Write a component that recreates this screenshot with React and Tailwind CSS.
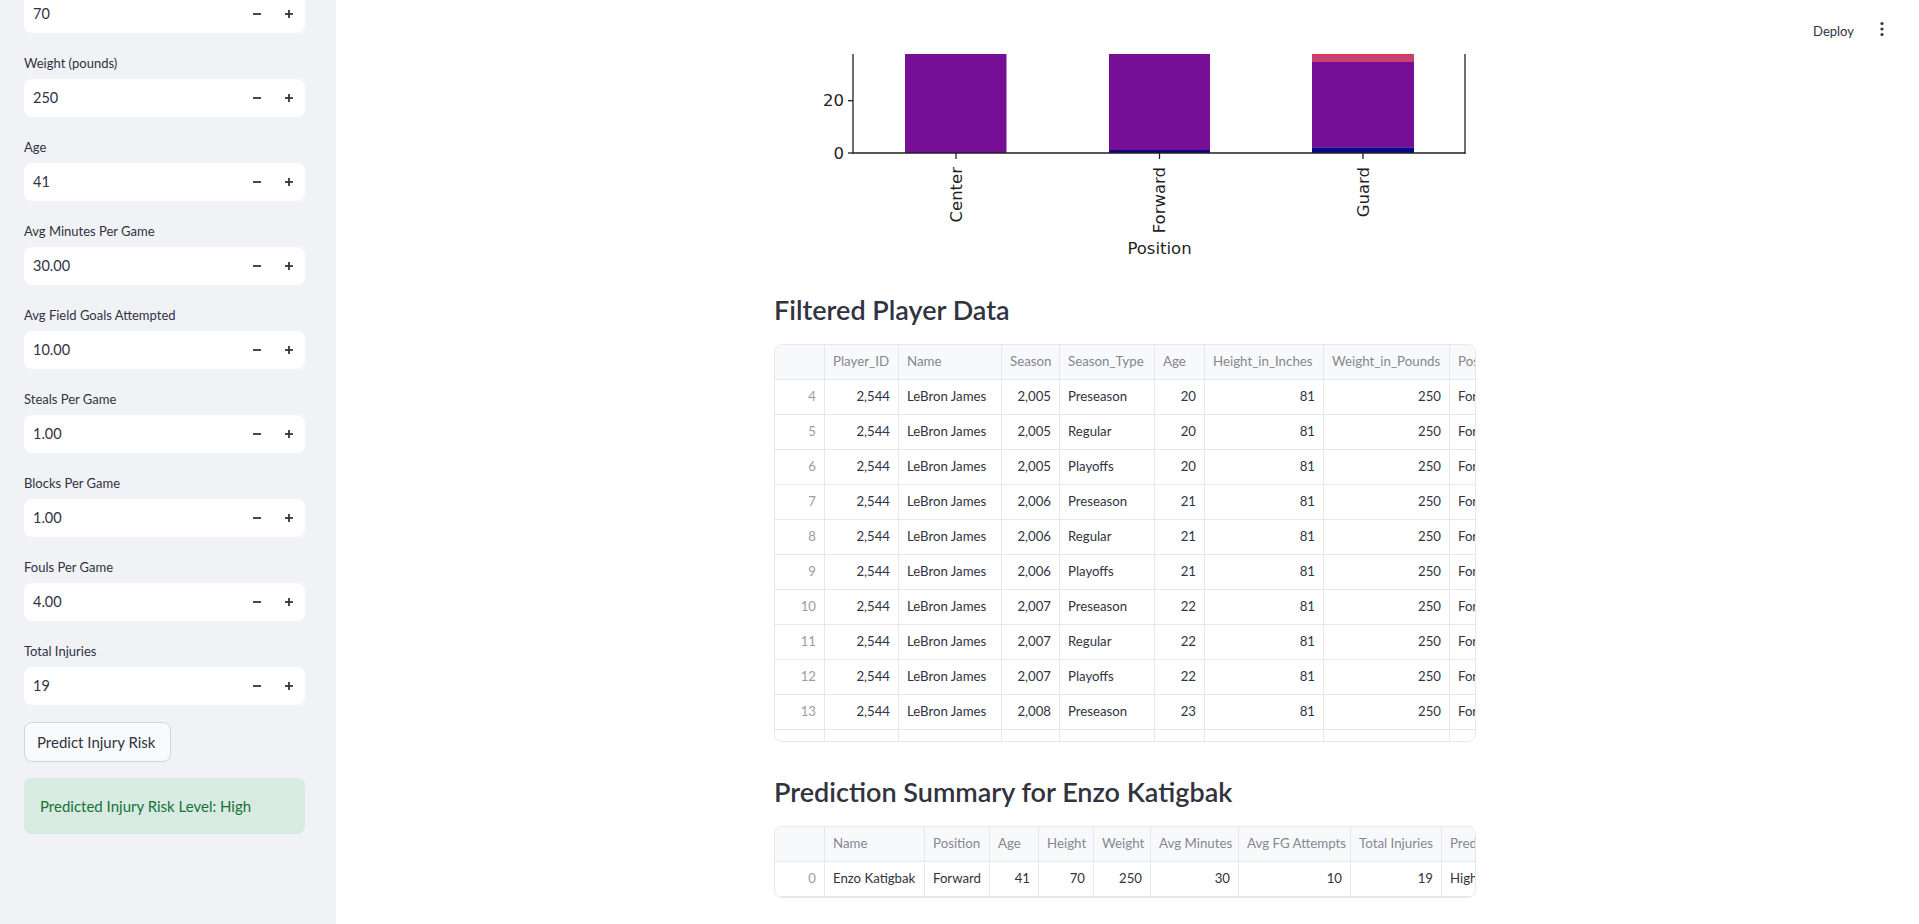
import React from "react";

const FONT = "[font-family:Lato,'Noto_Sans',sans-serif]";

function Minus() {
  return (
    <svg width="10" height="10" viewBox="0 0 10 10">
      <line x1="1" y1="5" x2="9" y2="5" stroke="#31333f" strokeWidth="1.8" />
    </svg>
  );
}
function Plus() {
  return (
    <svg width="10" height="10" viewBox="0 0 10 10">
      <line x1="1" y1="5" x2="9" y2="5" stroke="#31333f" strokeWidth="1.8" />
      <line x1="5" y1="1" x2="5" y2="9" stroke="#31333f" strokeWidth="1.8" />
    </svg>
  );
}

function NumberInput({ value }) {
  return (
    <div className="h-[38px] bg-white rounded-lg flex items-center">
      <span className="flex-1 pl-[9px] text-[14.5px] text-[#31333f]">{value}</span>
      <span className="w-8 h-full flex items-center justify-center">
        <Minus />
      </span>
      <span className="w-8 h-full flex items-center justify-center">
        <Plus />
      </span>
    </div>
  );
}

function Field({ label, value }) {
  return (
    <div className="mt-[19px]">
      <div className="h-[22px] leading-[22px] text-[13px] text-[#31333f]">{label}</div>
      <div className="mt-[5px]">
        <NumberInput value={value} />
      </div>
    </div>
  );
}

const fields = [
  ["Weight (pounds)", "250"],
  ["Age", "41"],
  ["Avg Minutes Per Game", "30.00"],
  ["Avg Field Goals Attempted", "10.00"],
  ["Steals Per Game", "1.00"],
  ["Blocks Per Game", "1.00"],
  ["Fouls Per Game", "4.00"],
  ["Total Injuries", "19"],
];

function Sidebar() {
  return (
    <aside className="w-[336px] shrink-0 bg-[#f0f2f6] h-full overflow-hidden pl-6 pr-[31px]">
      <div className="-mt-[5px] flex flex-col">
        <NumberInput value="70" />
        {fields.map(([l, v]) => (
          <Field key={l} label={l} value={v} />
        ))}
        <button className="mt-[17px] h-[40px] w-[147px] rounded-lg border border-[#d3d4d9] bg-[#f9fafb] text-[15px] text-[#31333f] text-left pl-[12px]">
          Predict Injury Risk
        </button>
        <div className="mt-[16px] h-[56px] rounded-lg bg-[#d7ebe3] flex items-center pl-4 text-[15px] text-[#177233]">
          Predicted Injury Risk Level: High
        </div>
      </div>
    </aside>
  );
}

function Chart() {
  const purple = "#760f95";
  const blue = "#0d0887";
  const pink = "#c9406d";
  const ink = "#1f1f1f";
  const labels = [
    ["Center", 182],
    ["Forward", 385.5],
    ["Guard", 589],
  ];
  return (
    <svg width="702" height="238" viewBox="0 0 702 238" className="block">
      <rect x="131" y="0" width="101.5" height="99" fill={purple} />
      <rect x="335" y="0" width="101" height="96" fill={purple} />
      <rect x="335" y="96" width="101" height="3" fill={blue} />
      <rect x="538" y="0" width="102" height="8" fill={pink} />
      <rect x="538" y="0" width="102" height="1" fill="#d2384f" />
      <rect x="538" y="8" width="102" height="85.3" fill={purple} />
      <rect x="538" y="93.3" width="102" height="5.7" fill={blue} />
      <line x1="79" y1="0" x2="79" y2="99.6" stroke={ink} strokeWidth="1.3" />
      <line x1="691" y1="0" x2="691" y2="99.6" stroke={ink} strokeWidth="1.3" />
      <line x1="78.4" y1="99" x2="691.6" y2="99" stroke={ink} strokeWidth="1.3" />
      <line x1="74" y1="99" x2="79" y2="99" stroke={ink} strokeWidth="1.3" />
      <line x1="74" y1="46.7" x2="79" y2="46.7" stroke={ink} strokeWidth="1.3" />
      <text x="70" y="99" textAnchor="end" dominantBaseline="central" fontFamily="DejaVu Sans" fontSize="16.5" fill={ink}>
        0
      </text>
      <text x="70" y="46.7" textAnchor="end" dominantBaseline="central" fontFamily="DejaVu Sans" fontSize="16.5" fill={ink}>
        20
      </text>
      {labels.map(([t, x]) => (
        <g key={t}>
          <line x1={x} y1="99" x2={x} y2="105" stroke={ink} strokeWidth="1.3" />
          <text
            x={x}
            y="113"
            textAnchor="end"
            dominantBaseline="central"
            fontFamily="DejaVu Sans"
            fontSize="16.5"
            fill={ink}
            transform={`rotate(-90 ${x} 113)`}
          >
            {t}
          </text>
        </g>
      ))}
      <text x="385.5" y="194" textAnchor="middle" dominantBaseline="central" fontFamily="DejaVu Sans" fontSize="16.5" fill={ink}>
        Position
      </text>
    </svg>
  );
}

function DataTable({ cols, rows, heightClass }) {
  return (
    <div className={`border border-[#e6e8ec] rounded-lg overflow-hidden ${heightClass}`}>
      <div className="flex h-[35px] bg-[#f8f9fb] border-b border-[#e6e8ec]">
        {cols.map((c, i) => (
          <div
            key={i}
            className={`${c.w} shrink-0 border-r border-[#e6e8ec] px-2 flex items-center text-[13.3px] text-[#858791] whitespace-nowrap overflow-hidden`}
          >
            {c.h}
          </div>
        ))}
      </div>
      {rows.map((r, ri) => (
        <div key={ri} className="flex h-[35px] border-b border-[#e6e8ec]">
          {cols.map((c, i) => (
            <div
              key={i}
              className={`${c.w} shrink-0 border-r border-[#e6e8ec] px-2 flex items-center text-[13.2px] whitespace-nowrap overflow-hidden ${
                c.right ? "justify-end" : "justify-start"
              } ${i === 0 ? "text-[#9a9ca6]" : "text-[#31333f]"}`}
            >
              {r[i]}
            </div>
          ))}
        </div>
      ))}
    </div>
  );
}

const t1cols = [
  { w: "w-[50px]", h: "", right: true },
  { w: "w-[74px]", h: "Player_ID", right: true },
  { w: "w-[103px]", h: "Name" },
  { w: "w-[58px]", h: "Season", right: true },
  { w: "w-[95px]", h: "Season_Type" },
  { w: "w-[50px]", h: "Age", right: true },
  { w: "w-[119px]", h: "Height_in_Inches", right: true },
  { w: "w-[126px]", h: "Weight_in_Pounds", right: true },
  { w: "w-[90px]", h: "Position" },
];

const types = ["Preseason", "Regular", "Playoffs"];
const t1rows = Array.from({ length: 11 }, (_, k) => {
  const idx = k + 4;
  const yr = 2005 + Math.floor(k / 3);
  const age = 20 + Math.floor(k / 3);
  return [String(idx), "2,544", "LeBron James", yr.toLocaleString("en-US"), types[k % 3], String(age), "81", "250", "Forward"];
});

const t2cols = [
  { w: "w-[50px]", h: "", right: true },
  { w: "w-[100px]", h: "Name" },
  { w: "w-[65px]", h: "Position" },
  { w: "w-[49px]", h: "Age", right: true },
  { w: "w-[55px]", h: "Height", right: true },
  { w: "w-[57px]", h: "Weight", right: true },
  { w: "w-[88px]", h: "Avg Minutes", right: true },
  { w: "w-[112px]", h: "Avg FG Attempts", right: true },
  { w: "w-[91px]", h: "Total Injuries", right: true },
  { w: "w-[140px]", h: "Predicted Risk" },
];
const t2rows = [["0", "Enzo Katigbak", "Forward", "41", "70", "250", "30", "10", "19", "High"]];

function Main() {
  return (
    <main className="flex-1 h-full bg-white flex flex-col overflow-hidden">
      <header className="h-[54px] shrink-0 flex justify-end items-start pt-[21px] pr-[29px]">
        <span className="text-[13px] leading-5 text-[#31333f]">Deploy</span>
        <svg width="16" height="18" viewBox="0 0 16 18" className="ml-[20px] mt-[-1px]">
          <circle cx="8" cy="3.5" r="1.6" fill="#31333f" />
          <circle cx="8" cy="9" r="1.6" fill="#31333f" />
          <circle cx="8" cy="14.5" r="1.6" fill="#31333f" />
        </svg>
      </header>
      <div className="w-[702px] ml-[438px]">
        <Chart />
        <h3 className="h-[36px] leading-[36px] text-[27px] font-semibold text-[#31333f]">Filtered Player Data</h3>
        <div className="mt-4">
          <DataTable cols={t1cols} rows={t1rows} heightClass="h-[398px]" />
        </div>
        <h3 className="mt-[32px] h-[36px] leading-[36px] text-[27px] font-semibold text-[#31333f]">
          Prediction Summary for Enzo Katigbak
        </h3>
        <div className="mt-4">
          <DataTable cols={t2cols} rows={t2rows} heightClass="" />
        </div>
      </div>
    </main>
  );
}

export default function App() {
  return (
    <div className={`${FONT} w-[1919px] h-[924px] flex overflow-hidden bg-white`}>
      <Sidebar />
      <Main />
    </div>
  );
}
